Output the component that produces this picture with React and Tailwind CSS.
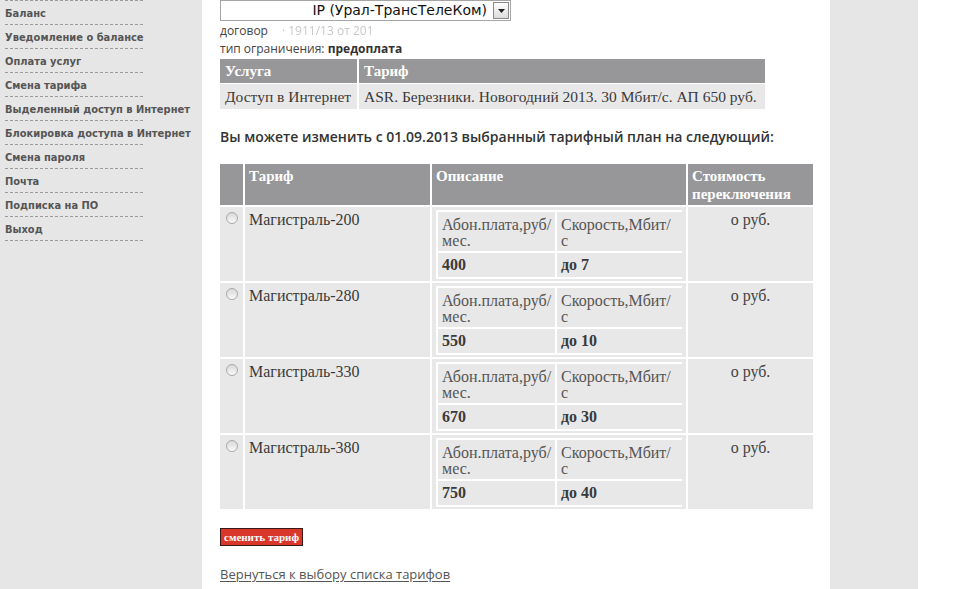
import React from "react";

const menu = [
  "Баланс",
  "Уведомление о балансе",
  "Оплата услуг",
  "Смена тарифа",
  "Выделенный доступ в Интернет",
  "Блокировка доступа в Интернет",
  "Смена пароля",
  "Почта",
  "Подписка на ПО",
  "Выход",
];

const tariffs = [
  { name: "Магистраль-200", price: "400", speed: "до 7" },
  { name: "Магистраль-280", price: "550", speed: "до 10" },
  { name: "Магистраль-330", price: "670", speed: "до 30" },
  { name: "Магистраль-380", price: "750", speed: "до 40" },
];

const serif = { fontFamily: "Georgia, 'Liberation Serif', serif" };

const Radio = () => (
  <span className="mt-[3px] ml-[6px] block h-[12px] w-[12px] rounded-full border border-[#a8a8a8] bg-gradient-to-b from-[#d8d8d8] to-[#fafafa]" />
);

const TariffRow = ({ t }) => (
  <div className="grid grid-cols-[23px_185px_254px_125px] gap-[2px]">
    <div className="bg-[#e8e8e9] pt-[2px] h-[74px]">
      <Radio />
    </div>
    <div className="bg-[#e8e8e9] px-[4px] pt-[1px] text-[16px] text-[#3a3a3a]">
      {t.name}
    </div>
    <div className="bg-[#e8e8e9] px-[4px] pt-[3px]">
      <div className="grid grid-cols-[117px_125px] gap-[2px] bg-white p-[2px] text-[#555]">
        <div className="bg-[#e8e8e9] px-[4px] pt-[5px] pb-[2px] text-[16px] leading-[16px]">
          Абон.плата,руб/ мес.
        </div>
        <div className="bg-[#e8e8e9] px-[4px] pt-[5px] pb-[2px] text-[16px] leading-[16px]">
          Скорость,Мбит/ с
        </div>
        <div className="bg-[#e8e8e9] px-[4px] py-[3px] text-[16px] font-bold leading-[18px] text-[#3a3a3a]">
          {t.price}
        </div>
        <div className="bg-[#e8e8e9] px-[4px] py-[3px] text-[16px] font-bold leading-[18px] text-[#3a3a3a]">
          {t.speed}
        </div>
      </div>
    </div>
    <div className="bg-[#e8e8e9] pt-[1px] text-center text-[16px] text-[#444]">о руб.</div>
  </div>
);

export default function App() {
  return (
    <div className="flex h-[589px] w-[960px] overflow-hidden bg-white">
      {/* sidebar */}
      <div
        className="w-[202px] shrink-0 bg-[#e6e6e6] pl-[5px]"
        style={{ fontFamily: "'DejaVu Sans Condensed', 'DejaVu Sans', sans-serif" }}
      >
        <div className="w-[138px] border-t border-dashed border-[#9a9a9a]" />
        {menu.map((m) => (
          <div key={m} className="flex h-[24px] w-[138px] items-end border-b border-dashed border-[#9a9a9a] pb-[2px]">
            <span className="whitespace-nowrap text-[11px] font-bold text-[#555]">{m}</span>
          </div>
        ))}
      </div>

      {/* content */}
      <div className="w-[628px] shrink-0 pl-[18px]" style={{ fontFamily: "'Open Sans', sans-serif" }}>
        <div className="flex h-[21px] w-[291px] items-center justify-end border border-[#a5a5a5] bg-white pr-px">
          <span className="mr-[6px] text-[14px] text-[#111]" style={{ fontFamily: "'DejaVu Sans', sans-serif" }}>
            IP (Урал-ТрансТелеКом)
          </span>
          <span className="flex h-[17px] w-[16px] items-center justify-center border border-[#888] bg-gradient-to-b from-white to-[#dcdcdc]">
            <svg width="7" height="4" viewBox="0 0 7 4">
              <path d="M0 0h7L3.5 4z" fill="#222" />
            </svg>
          </span>
        </div>
        <div className="mt-[1px] flex h-[18px] items-center text-[12px] text-[#444]">
          <span>договор</span>
          <span className="ml-[14px] text-[#c8c8c8] blur-[0.6px]">· 1911/13 от 201</span>
        </div>
        <div className="h-[18px] text-[12px] text-[#444]">
          тип ограничения: <b className="font-bold text-[#333]">предоплата</b>
        </div>

        <div className="mt-[1px] w-[545px]" style={serif}>
          <div className="grid grid-cols-[137px_406px] gap-[2px]">
            <div className="bg-[#979799] px-[5px] py-[2px] text-[15px] font-bold leading-[20px] text-white">Услуга</div>
            <div className="bg-[#979799] px-[5px] py-[2px] text-[15px] font-bold leading-[20px] text-white">Тариф</div>
          </div>
          <div className="mt-[1px] grid grid-cols-[137px_406px] gap-[2px]">
            <div className="whitespace-nowrap bg-[#e8e8e9] px-[5px] py-[3px] text-[15.5px] leading-[19px] text-[#3a3a3a]">
              Доступ в Интернет
            </div>
            <div className="whitespace-nowrap bg-[#e8e8e9] px-[5px] py-[3px] text-[15.5px] leading-[19px] text-[#3a3a3a]">
              ASR. Березники. Новогодний 2013. 30 Мбит/с. АП 650 руб.
            </div>
          </div>
        </div>

        <div className="mt-[17px] text-[14px] font-semibold text-[#333]">
          Вы можете изменить с 01.09.2013 выбранный тарифный план на следующий:
        </div>

        <div className="mt-[17px] flex w-[593px] flex-col gap-[2px]" style={serif}>
          <div className="grid h-[41px] grid-cols-[23px_185px_254px_125px] gap-[2px] text-[15px] font-bold leading-[18px] text-white">
            <div className="bg-[#979799]" />
            <div className="bg-[#979799] px-[4px] pt-[3px]">Тариф</div>
            <div className="bg-[#979799] px-[4px] pt-[3px]">Описание</div>
            <div className="bg-[#979799] px-[4px] pt-[3px]">Стоимость переключения</div>
          </div>
          {tariffs.map((t) => (
            <TariffRow key={t.name} t={t} />
          ))}
        </div>

        <button
          className="mt-[19px] block h-[18px] border border-[#3a1a16] bg-[#d9372b] px-[3px] text-[11px] font-bold leading-[14px] text-white"
          style={serif}
        >
          сменить тариф
        </button>

        <a href="#" className="mt-[19px] block text-[13px] text-[#555] underline underline-offset-2">
          Вернуться к выбору списка тарифов
        </a>
      </div>

      {/* right column */}
      <div className="w-[88px] shrink-0 bg-[#e6e6e6]" />
      <div className="flex-1 bg-white" />
    </div>
  );
}
